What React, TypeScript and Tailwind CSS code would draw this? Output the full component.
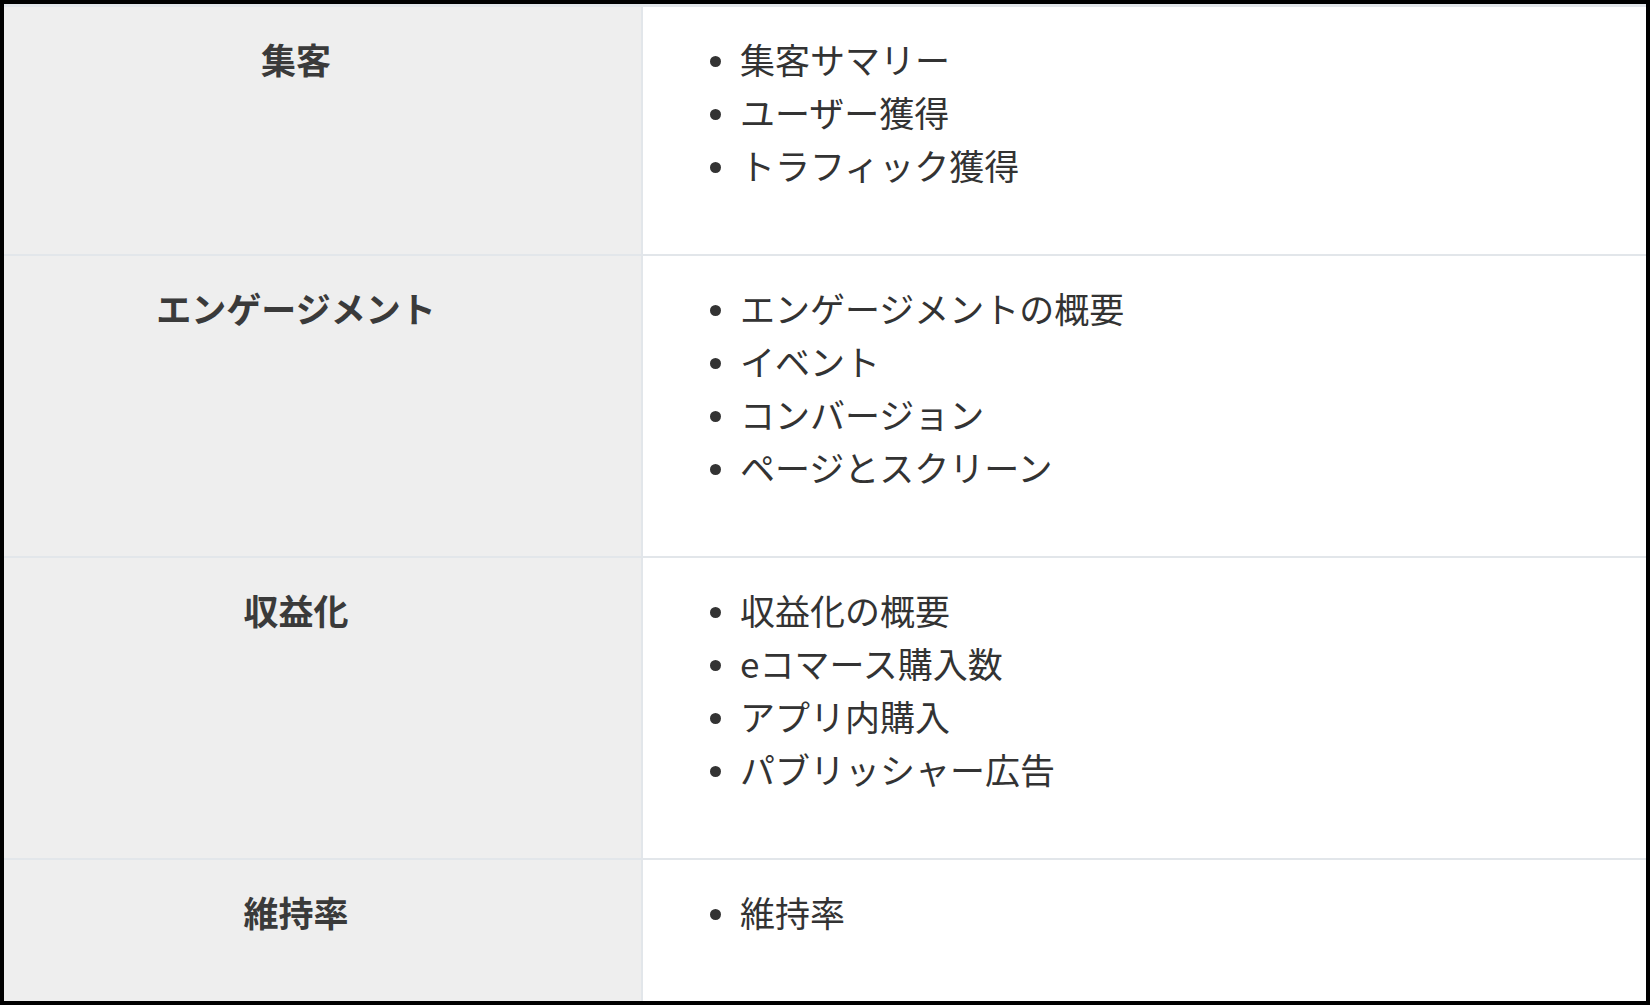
const sections = [
  { title: '集客', items: ['集客サマリー', 'ユーザー獲得', 'トラフィック獲得'] },
  {
    title: 'エンゲージメント',
    items: ['エンゲージメントの概要', 'イベント', 'コンバージョン', 'ページとスクリーン'],
  },
  { title: '収益化', items: ['収益化の概要', 'eコマース購入数', 'アプリ内購入', 'パブリッシャー広告'] },
  { title: '維持率', items: ['維持率'] },
]

export default function App() {
  return (
    <div className="h-[1005px] w-[1650px] bg-black px-[4px] pt-[4px] pb-[4px]">
      <div
        className="flex h-full flex-col border-t-[3px] border-[#e2e6ea] bg-white text-[#333333]"
        style={{ fontFamily: '"Noto Sans CJK JP", "Noto Sans", sans-serif' }}
      >
        {sections.map((s, i) => (
          <div
            key={s.title}
            className={
              i < sections.length - 1
                ? 'flex border-b-2 border-[#e2e6ea]'
                : 'flex flex-1'
            }
          >
            <div className="w-[637px] shrink-0 bg-[#eeeeee] pt-[25px] pr-[53px] pb-[63px] text-center text-[35px] font-bold leading-[53px] text-[#3a3a3a]">
              {s.title}
            </div>
            <div className="flex-1 border-l-2 border-[#e2e6ea] pt-[25px] pb-[63px]">
              <ul>
                {s.items.map((item) => (
                  <li key={item} className="flex items-center text-[35px] leading-[53px]">
                    <span className="mt-[5px] ml-[67px] mr-[19px] h-[11px] w-[11px] shrink-0 rounded-full bg-[#333333]" />
                    <span>{item}</span>
                  </li>
                ))}
              </ul>
            </div>
          </div>
        ))}
      </div>
    </div>
  )
}
